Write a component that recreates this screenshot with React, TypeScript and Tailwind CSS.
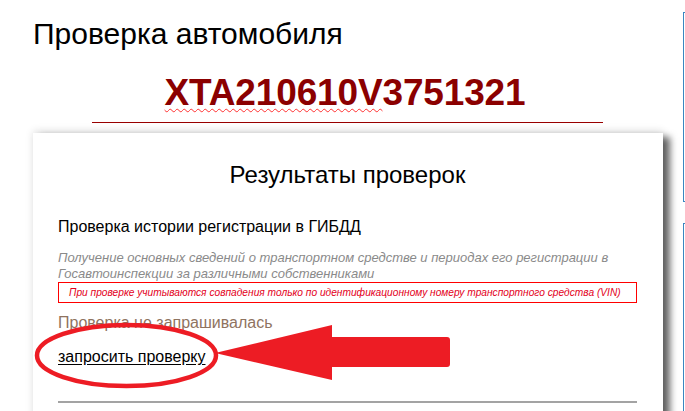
import React from 'react';

const font = "font-['Liberation_Sans',Arial,sans-serif]";

function Markup() {
  // red hand-drawn circle + arrow over the link
  return (
    <svg className="absolute left-0 top-0 pointer-events-none" width="683" height="411" viewBox="0 0 683 411">
      <ellipse cx="126.5" cy="355.5" rx="89.5" ry="30.5" fill="none" stroke="#ed1c24" strokeWidth="4.5" />
      <path
        d="M215 353 L332 325 L332 337 L447 337 Q450 337 450 340 L450 364 Q450 367 447 367 L332 367 L332 380 Z"
        fill="#ed1c24"
      />
    </svg>
  );
}

export default function App() {
  return (
    <div className={`w-[685px] h-[411px] overflow-hidden bg-white flex ${font}`}>
      <div className="relative w-[683px] shrink-0">
        <h1 className="pl-[33px] pt-[16px] text-[30px] leading-[36px] text-black font-normal">
          Проверка автомобиля
        </h1>

        <div className="ml-[30px] w-[630px] mt-[19px] text-center text-[37px] leading-[44px] font-bold tracking-[-0.15px] text-[#8b0000]">
          <span className="underline decoration-wavy decoration-[#ff3030] decoration-1 underline-offset-[3px]">
            XTA210610V
          </span>
          3751321
        </div>

        <div className="ml-[92px] w-[511px] mt-[7px] h-px bg-[#990000]" />

        <div className="ml-[33px] w-[630px] mt-[10px] h-[300px] bg-white pt-[28px] pl-[25px] pr-[26px] shadow-[7px_4px_7px_rgba(0,0,0,0.6),0_-2px_8px_rgba(0,0,0,0.12)]">
          <h2 className="text-center text-[24px] leading-[28px] text-black font-normal">Результаты проверок</h2>

          <div className="mt-[28px] text-[16px] leading-[20px] text-black">Проверка истории регистрации в ГИБДД</div>

          <p className="mt-[13px] text-[13px] leading-[16px] italic text-[#8a8a8a]">
            Получение основных сведений о транспортном средстве и периодах его регистрации в Госавтоинспекции за
            различными собственниками
          </p>

          <div className="border border-[#ff0000] h-[21px] pl-[10px] whitespace-nowrap overflow-hidden text-[10.2px] leading-[19px] italic text-[#e3001b]">
            При проверке учитываются совпадения только по идентификационному номеру транспортного средства (VIN)
          </div>

          <div className="mt-[10px] text-[16px] leading-[20px] text-[#8f735f]">Проверка не запрашивалась</div>

          <div className="mt-[14px] text-[16px] leading-[20px]">
            <a href="#" className="text-black underline underline-offset-2">
              запросить проверку
            </a>
          </div>

          <div className="mt-[34px] h-[2px] bg-[#a3a3a3]" />
        </div>

        <Markup />
      </div>

      <div className="flex flex-col shrink-0 w-[200px]">
        <div className="mt-[12px] h-[201px] border-l border-t border-b border-[#3a86c0]" />
        <div className="mt-[21px] h-[200px] border-l border-t border-[#3a86c0]" />
      </div>
    </div>
  );
}
